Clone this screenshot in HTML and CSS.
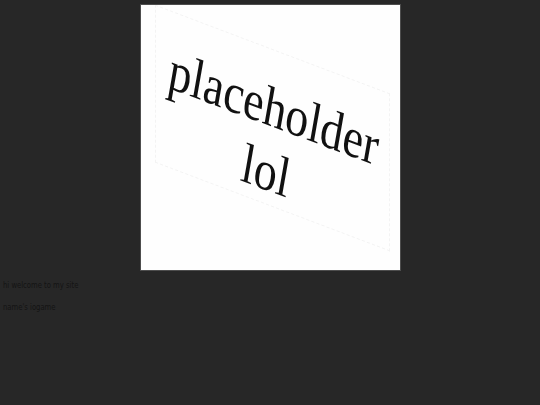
FILE: index.html
```html
<!DOCTYPE html>
<html>
<head>
<meta charset="utf-8">
<link rel="stylesheet" href="styles.css">
</head>
<body>
<div class="hero">
  <div class="photo">
    <div class="paper"></div>
    <div class="scrawl">
      <span class="line">placeholder</span>
      <span class="line line-lol">lol</span>
    </div>
  </div>
</div>
<div class="intro">
  <p class="note">hi welcome to my site</p>
  <p class="note">name's iogame</p>
</div>
</body>
</html>
```

FILE: styles.css
```css
html, body {
  margin: 0;
  padding: 0;
  background: #272727;
}
body {
  width: 540px;
  height: 405px;
  overflow: hidden;
}
.hero {
  display: flex;
  justify-content: center;
  padding-top: 5px;
}
.photo {
  position: relative;
  width: 259px;
  height: 265px;
  background: #fefefe;
  box-shadow: 0 0 0 1px #4d4d4d;
  overflow: hidden;
  display: flex;
  align-items: center;
  justify-content: center;
}
.paper {
  position: absolute;
  left: 14px;
  top: 44px;
  width: 233px;
  height: 156px;
  border: 1px dashed #f3f3f3;
  transform: skewY(20.7deg);
}
.scrawl {
  display: flex;
  flex-direction: column;
  align-items: center;
  font-family: "Liberation Serif", "Times New Roman", serif;
  font-size: 47px;
  line-height: 53px;
  color: #111;
  transform: translate(-1px, 1px) rotate(10deg) skewY(10.5deg) scaleY(1.18);
}
.line-lol {
  margin-left: 6px;
}
.intro {
  padding: 4px 0 0 3px;
}
.note {
  margin: 0;
  font-family: "DejaVu Sans Condensed", "DejaVu Sans", sans-serif;
  font-size: 9.5px;
  line-height: 22px;
  color: #141414;
  transform: scaleX(0.8);
  transform-origin: left center;
}
```
